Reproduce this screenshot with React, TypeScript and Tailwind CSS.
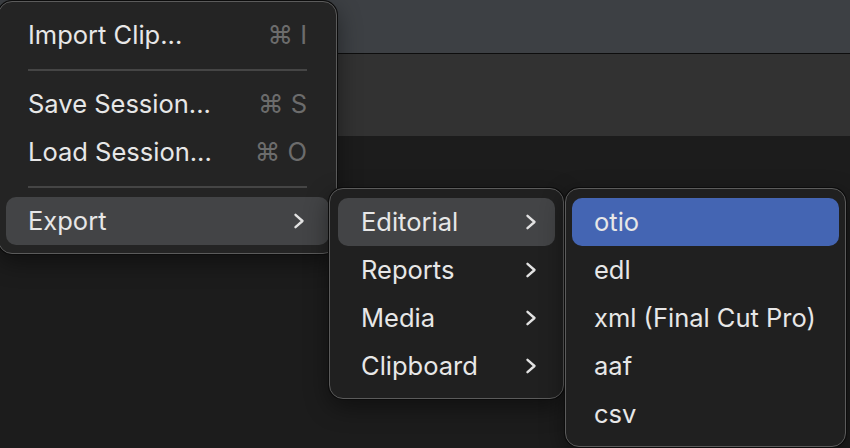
import { ReactNode } from "react";

type Row = { label: string; shortcut?: string; submenu?: boolean; active?: "gray" | "blue" };

function Chevron() {
  return (
    <svg width="12" height="16" viewBox="0 0 12 16" fill="none" className="shrink-0">
      <path d="M2.5 1.8l7 6.2-7 6.2" stroke="#e2e2e2" strokeWidth="2.4" strokeLinecap="round" strokeLinejoin="round" />
    </svg>
  );
}

function MenuRow({ row, pad }: { row: Row; pad: string }) {
  const bg =
    row.active === "blue" ? "bg-[#4465b3]" : row.active === "gray" ? "bg-[#434446]" : "";
  return (
    <div className={`flex h-12 items-center rounded-[10px] ${pad} ${bg}`}>
      <span className="flex-1 text-[#e7e7e7]">{row.label}</span>
      {row.shortcut && <span className="text-[#6c6c6c]">{row.shortcut}</span>}
      {row.submenu && <Chevron />}
    </div>
  );
}

function Separator() {
  return (
    <div className="flex h-[21px] items-center px-[22px]">
      <div className="h-[2px] w-full bg-[#454545]" />
    </div>
  );
}

function Menu({ className, children }: { className: string; children: ReactNode }) {
  return (
    <div
      className={`absolute rounded-[14px] border border-[#5b5b5b] shadow-[0_0_0_1px_#0c0c0c,0_8px_24px_rgba(0,0,0,0.45)] ${className}`}
    >
      {children}
    </div>
  );
}

export default function App() {
  return (
    <div className="relative h-[448px] w-[850px] overflow-hidden bg-[#1c1c1c] text-[25.5px] font-[Inter,'Noto_Sans',sans-serif]">
      {/* window chrome behind the menus */}
      <div className="h-[53px] bg-[#3d4044]" />
      <div className="h-px bg-[#0d0d0d]" />
      <div className="h-[82px] bg-[#323232]" />

      <Menu className="left-[-2px] top-px w-[339px] bg-[#242424] px-[7px] pt-[9px] pb-[8px]">
        <MenuRow row={{ label: "Import Clip...", shortcut: "⌘ I" }} pad="pl-[22px] pr-[22px]" />
        <Separator />
        <MenuRow row={{ label: "Save Session...", shortcut: "⌘ S" }} pad="pl-[22px] pr-[22px]" />
        <MenuRow row={{ label: "Load Session...", shortcut: "⌘ O" }} pad="pl-[22px] pr-[22px]" />
        <Separator />
        <MenuRow row={{ label: "Export", submenu: true, active: "gray" }} pad="pl-[22px] pr-[24px]" />
      </Menu>

      <Menu className="left-[329px] top-[188px] w-[235px] bg-[#202020] px-[8px] pt-[9px] pb-[8px]">
        {["Editorial", "Reports", "Media", "Clipboard"].map((label, i) => (
          <MenuRow
            key={label}
            row={{ label, submenu: true, active: i === 0 ? "gray" : undefined }}
            pad="pl-[23px] pr-[18px]"
          />
        ))}
      </Menu>

      <Menu className="left-[565px] top-[188px] w-[281px] bg-[#202020] px-[6px] pt-[9px] pb-[8px]">
        {["otio", "edl", "xml (Final Cut Pro)", "aaf", "csv"].map((label, i) => (
          <MenuRow
            key={label}
            row={{ label, active: i === 0 ? "blue" : undefined }}
            pad="pl-[22px] pr-[22px]"
          />
        ))}
      </Menu>
    </div>
  );
}
